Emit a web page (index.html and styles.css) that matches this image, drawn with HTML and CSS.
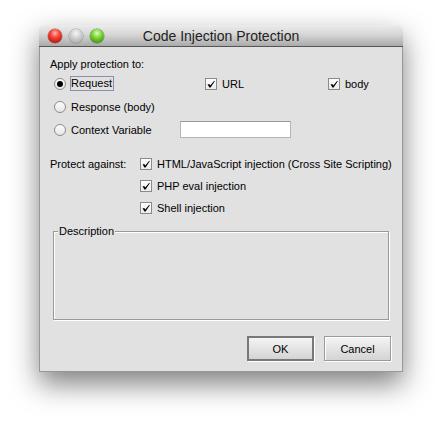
FILE: index.html
```html
<!DOCTYPE html>
<html>
<head>
<meta charset="utf-8">
<link rel="stylesheet" href="styles.css">
</head>
<body>
<div class="window">
  <div class="titlebar">
    <div class="lights">
      <span class="light red"></span>
      <span class="light grey"></span>
      <span class="light green"></span>
    </div>
    <div class="title">Code Injection Protection</div>
    <div></div>
  </div>
  <div class="content">
    <div class="heading">Apply protection to:</div>
    <div class="target-grid">
      <div class="opt"><span class="radio on"></span><span class="focus">Request</span></div>
      <div class="opt"><span class="check"><svg width="10" height="10" viewBox="0 0 10 10"><path d="M1.5 5.2 L3.6 5.2 L4.3 6.6 L8.2 1.8 L8.8 2.2 L4.6 8.6 L3.4 8.6 Z" fill="#000"/></svg></span><span>URL</span></div>
      <div class="opt"><span class="check"><svg width="10" height="10" viewBox="0 0 10 10"><path d="M1.5 5.2 L3.6 5.2 L4.3 6.6 L8.2 1.8 L8.8 2.2 L4.6 8.6 L3.4 8.6 Z" fill="#000"/></svg></span><span>body</span></div>
      <div class="opt span3"><span class="radio"></span><span>Response (body)</span></div>
      <div class="opt span3"><span class="radio"></span><span class="ctx-label">Context Variable</span><span class="field"></span></div>
    </div>
    <div class="protect">
      <div class="protect-label">Protect against:</div>
      <div class="protect-list">
        <div class="opt"><span class="check"><svg width="10" height="10" viewBox="0 0 10 10"><path d="M1.5 5.2 L3.6 5.2 L4.3 6.6 L8.2 1.8 L8.8 2.2 L4.6 8.6 L3.4 8.6 Z" fill="#000"/></svg></span><span>HTML/JavaScript injection (Cross Site Scripting)</span></div>
        <div class="opt"><span class="check"><svg width="10" height="10" viewBox="0 0 10 10"><path d="M1.5 5.2 L3.6 5.2 L4.3 6.6 L8.2 1.8 L8.8 2.2 L4.6 8.6 L3.4 8.6 Z" fill="#000"/></svg></span><span>PHP eval injection</span></div>
        <div class="opt"><span class="check"><svg width="10" height="10" viewBox="0 0 10 10"><path d="M1.5 5.2 L3.6 5.2 L4.3 6.6 L8.2 1.8 L8.8 2.2 L4.6 8.6 L3.4 8.6 Z" fill="#000"/></svg></span><span>Shell injection</span></div>
      </div>
    </div>
    <div class="desc">
      <span class="legend">Description</span>
    </div>
    <div class="buttons">
      <button class="btn default">OK</button>
      <button class="btn">Cancel</button>
    </div>
  </div>
</div>
</body>
</html>
```
FILE: styles.css
```css
* { box-sizing: border-box; }
html, body { margin: 0; padding: 0; background: #fff; }
body {
  font-family: "Liberation Sans", Arial, sans-serif;
  font-size: 11px;
  color: #000;
  width: 442px;
  height: 426px;
  overflow: hidden;
}
.window {
  width: 364px;
  margin: 25px 0 0 39px;
  border-radius: 5px 5px 0 0;
  box-shadow: 0 12px 28px rgba(0,0,0,0.5);
}
.titlebar {
  height: 22px;
  border-radius: 5px 5px 0 0;
  background: linear-gradient(#ececec, #d6d6d6 45%, #aaaaaa);
  border-bottom: 1px solid #555;
  display: grid;
  grid-template-columns: 1fr auto 1fr;
  align-items: center;
}
.lights {
  display: flex;
  gap: 7px;
  padding-left: 9px;
  padding-top: 1px;
}
.light {
  width: 14px;
  height: 14px;
  border-radius: 50%;
  display: block;
}
.red {
  background: radial-gradient(circle at 50% 30%, #ffb7ae 0, #f5493d 35%, #c0150b 80%, #8a0a04 100%);
  box-shadow: 0 0 0 0.5px rgba(80,0,0,0.5);
}
.grey {
  background: radial-gradient(circle at 50% 30%, #f6f6f6 0, #d2d2d2 40%, #a8a8a8 90%);
  box-shadow: 0 0 0 0.5px rgba(0,0,0,0.3);
}
.green {
  background: radial-gradient(circle at 50% 30%, #dcffbc 0, #80d43a 38%, #3f9c0e 80%, #2b7004 100%);
  box-shadow: 0 0 0 0.5px rgba(0,60,0,0.5);
}
.title {
  font-size: 14px;
  color: #222;
  padding-top: 1px;
  white-space: nowrap;
}
.content {
  height: 325px;
  background: #e1e1e1;
  border: 1px solid #979797;
  border-top: none;
  padding: 10px 12px 0 10px;
}
.heading {
  height: 14px;
  line-height: 14px;
  margin-bottom: 1px;
}
.target-grid {
  display: grid;
  grid-template-columns: 151px 123px auto;
  grid-auto-rows: 23px;
  padding-left: 4px;
}
.span3 { grid-column: 1 / 4; }
.opt {
  display: flex;
  align-items: center;
  gap: 5px;
  height: 100%;
  white-space: nowrap;
}
.radio {
  width: 12px;
  height: 12px;
  border-radius: 50%;
  border: 1px solid #8c8c8c;
  background: linear-gradient(#fdfdfd, #e6e6e6);
  display: flex;
  align-items: center;
  justify-content: center;
  flex: none;
}
.radio.on::after {
  content: "";
  width: 6px;
  height: 6px;
  border-radius: 50%;
  background: #000;
}
.focus {
  border: 1px solid #8e8eaa;
  padding: 0 1px 0 0;
  line-height: 13px;
  margin-left: -1px;
}
.ctx-label { width: 104px; }
.field {
  width: 111px;
  height: 17px;
  background: #fff;
  border: 1px solid #b5b5b5;
  border-top-color: #9a9a9a;
}
.check {
  width: 12px;
  height: 12px;
  border: 1px solid #8a8a8a;
  background: linear-gradient(#fff, #ececec);
  display: flex;
  align-items: center;
  justify-content: center;
  flex: none;
}
.check svg { display: block; }
.protect {
  display: flex;
  margin-top: 12px;
}
.protect-label {
  width: 90px;
  flex: none;
  height: 22px;
  line-height: 22px;
}
.protect-list {
  display: grid;
  grid-auto-rows: 22px;
}
.desc {
  position: relative;
  width: 336px;
  height: 89px;
  margin: 12px 0 0 3px;
  border: 1px solid #999;
  box-shadow: 1px 1px 0 #fff, inset 1px 1px 0 #fff;
}
.legend {
  position: absolute;
  left: 4px;
  top: -8px;
  background: #e1e1e1;
  line-height: 14px;
  padding: 0 1px;
}
.buttons {
  display: flex;
  justify-content: flex-end;
  gap: 10px;
  margin-top: 16px;
  width: 341px;
}
.btn {
  font-family: "Liberation Sans", Arial, sans-serif;
  font-size: 11px;
  color: #000;
  width: 67px;
  height: 25px;
  padding: 0;
  border: 1px solid #9a9a9a;
  background: linear-gradient(#f4f4f4, #e4e4e4 50%, #d4d4d4);
  box-shadow: inset 1px 1px 0 #fff, 1px 1px 0 #fff;
}
.btn.default {
  border: 2px solid #787878;
  box-shadow: 1px 1px 0 #fff;
}
```
